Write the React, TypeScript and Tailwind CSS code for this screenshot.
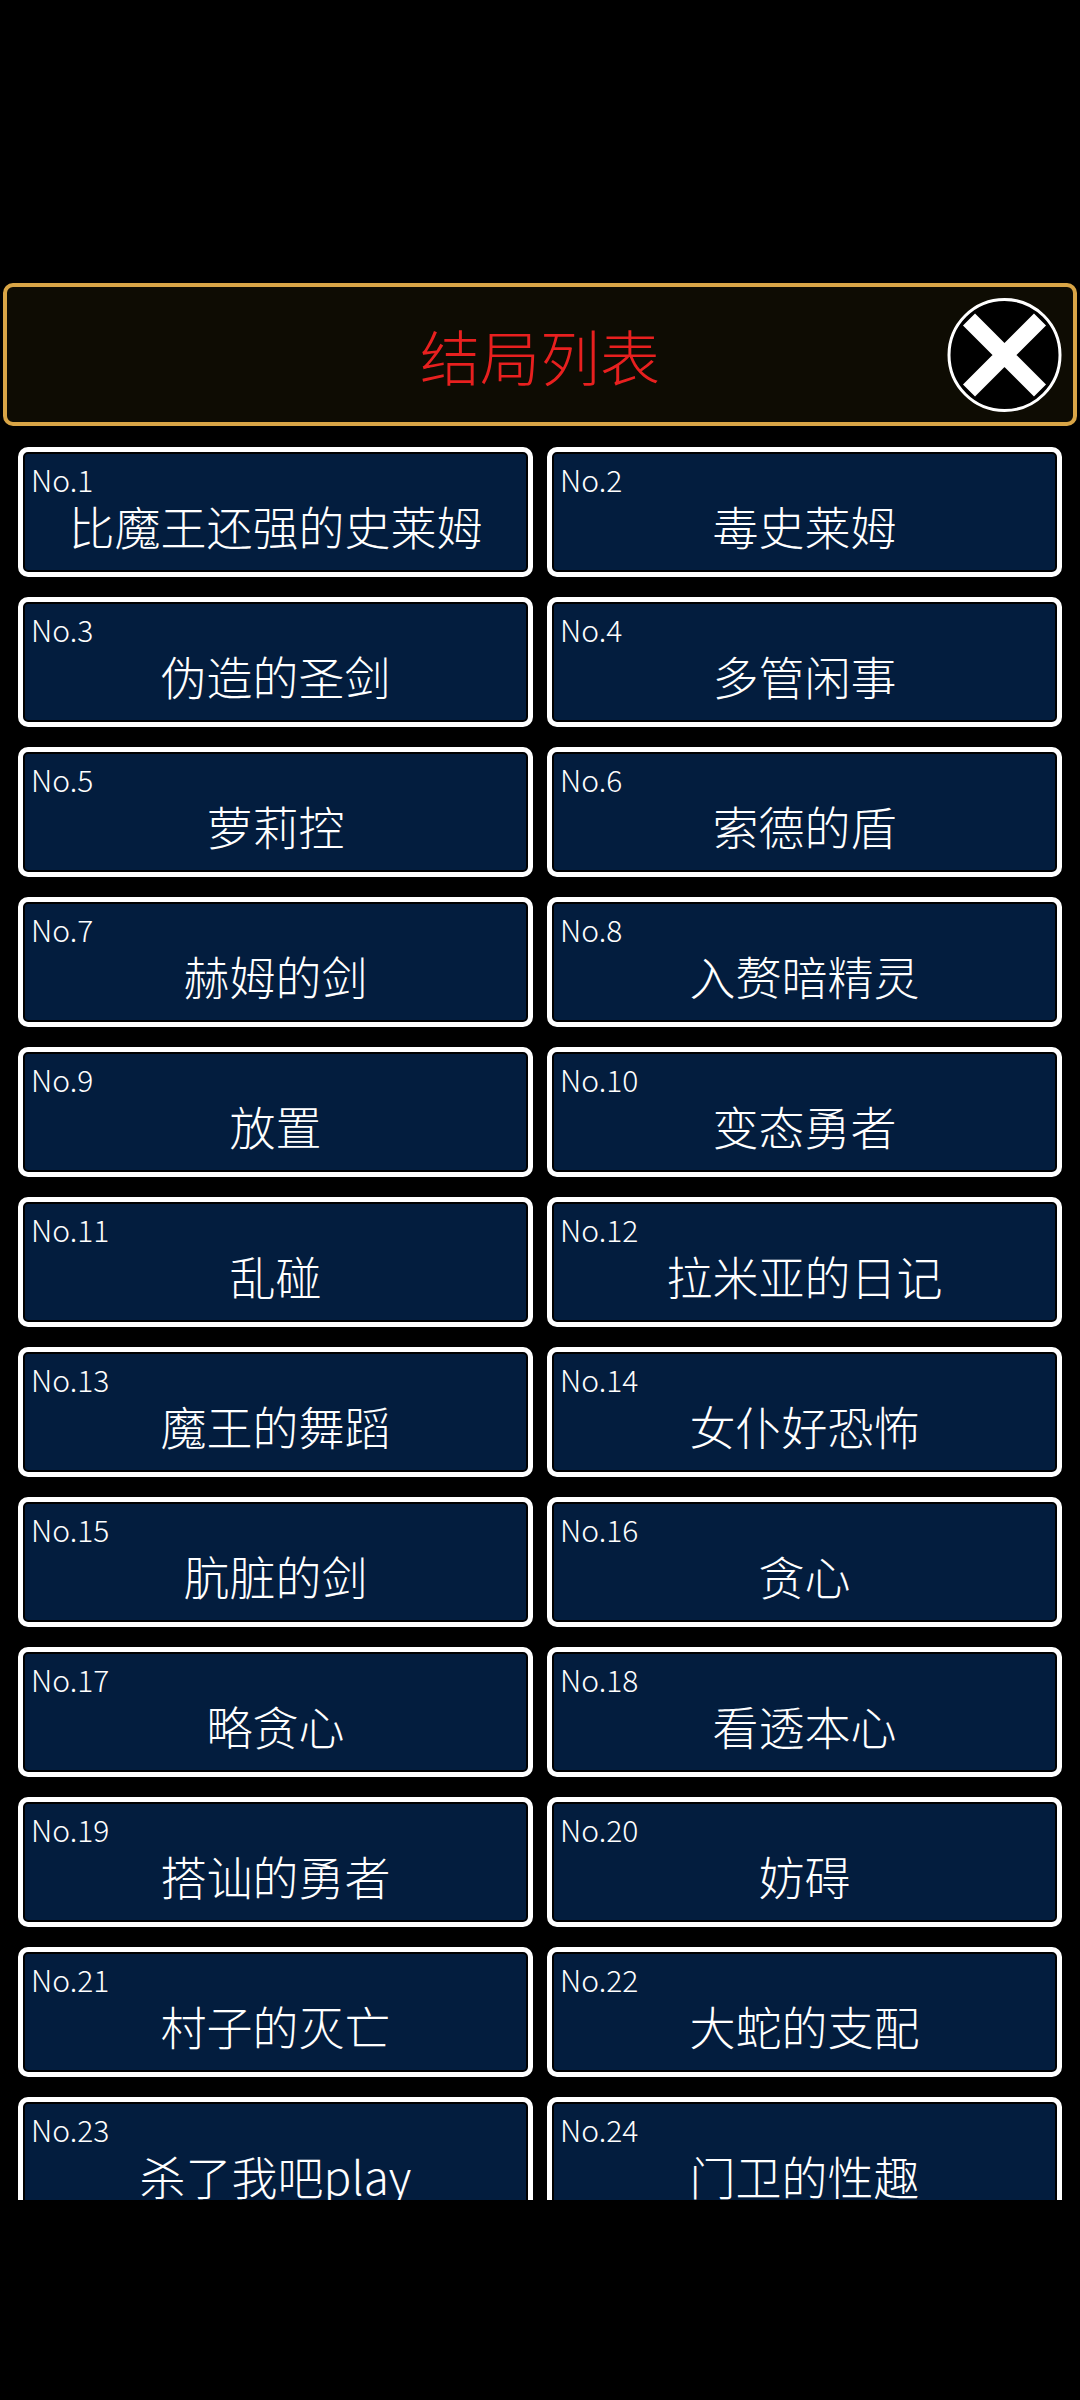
const endings = [
  "比魔王还强的史莱姆",
  "毒史莱姆",
  "伪造的圣剑",
  "多管闲事",
  "萝莉控",
  "索德的盾",
  "赫姆的剑",
  "入赘暗精灵",
  "放置",
  "变态勇者",
  "乱碰",
  "拉米亚的日记",
  "魔王的舞蹈",
  "女仆好恐怖",
  "肮脏的剑",
  "贪心",
  "略贪心",
  "看透本心",
  "搭讪的勇者",
  "妨碍",
  "村子的灭亡",
  "大蛇的支配",
  "杀了我吧play",
  "门卫的性趣",
]

function CloseButton() {
  return (
    <button className="absolute right-[11px] top-1/2 h-[115px] w-[115px] -translate-y-1/2">
      <svg width="115" height="115" viewBox="0 0 115 115">
        <circle cx="57.5" cy="57.5" r="55.5" fill="#000" stroke="#fff" strokeWidth="3" />
        <path d="M22 22 L93 93 M93 22 L22 93" stroke="#fff" strokeWidth="17" strokeLinecap="butt" />
      </svg>
    </button>
  )
}

function EndingCard({ no, title }: { no: number; title: string }) {
  return (
    <div className="h-[130px] rounded-[10px] border-[5px] border-white bg-[#031d3e] px-[8px] pt-[9px] font-light text-white shadow-[inset_0_0_0_2px_#000]">
      <div className="text-[30px] leading-[36px]">No.{no}</div>
      <div className="mt-[3px] whitespace-nowrap text-center text-[46px] leading-[50px]">{title}</div>
    </div>
  )
}

export default function App() {
  return (
    <div
      className="flex h-[2400px] w-[1080px] flex-col bg-black pt-[283px]"
      style={{ fontFamily: '"Noto Sans CJK SC", "Noto Sans", sans-serif' }}
    >
      <div className="relative mx-[3px] flex h-[143px] items-center justify-center rounded-[10px] border-4 border-[#d9a546] bg-[#0e0c03]">
        <h1 className="text-[60px] font-light leading-none text-[#e8201f]">结局列表</h1>
        <CloseButton />
      </div>
      <div className="mt-[21px] grid h-[1753px] grid-cols-2 content-start gap-x-[14px] gap-y-[20px] overflow-hidden px-[18px]">
        {endings.map((t, i) => (
          <EndingCard key={i} no={i + 1} title={t} />
        ))}
      </div>
    </div>
  )
}
